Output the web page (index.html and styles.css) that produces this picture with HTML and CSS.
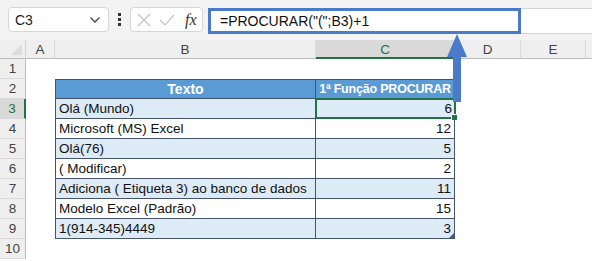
FILE: index.html
```html
<!DOCTYPE html>
<html lang="pt">
<head>
  <meta charset="UTF-8">
  <title>PROCURAR</title>
  <link rel="stylesheet" href="styles.css">
</head>
<body>
  <div class="toolbar">
    <div class="namebox">
      <span>C3</span>
      <svg class="chevron" width="12" height="8" viewBox="0 0 12 8"><path d="M1.5 1.5 L6 6 L10.5 1.5" fill="none" stroke="#444" stroke-width="1.3"/></svg>
    </div>
    <div class="dots"><i></i><i></i><i></i></div>
    <div class="fxbox">
      <svg width="14" height="14" viewBox="0 0 14 14"><path d="M1 1 L13 13 M13 1 L1 13" stroke="#c4c4c4" stroke-width="1.2"/></svg>
      <svg width="16" height="14" viewBox="0 0 16 14"><path d="M1 7 L6 12 L15 2" fill="none" stroke="#c4c4c4" stroke-width="1.2"/></svg>
      <span class="fx">fx</span>
    </div>
    <div class="formula">
      <div class="formula-text">=PROCURAR("(";B3)+1</div>
    </div>
  </div>

  <div class="sheet">
    <div class="corner"><span class="tri"></span></div>
    <div class="colhead">A</div>
    <div class="colhead">B</div>
    <div class="colhead active">C</div>
    <div class="colhead">D</div>
    <div class="colhead">E</div>
    <div class="colhead last"></div>

    <div class="rowhead">1</div><div></div><div></div><div></div><div></div><div></div><div></div>

    <div class="rowhead">2</div><div></div>
    <div class="cell th first top">Texto</div>
    <div class="cell th top narrow">1ª Função PROCURAR</div>
    <div></div><div></div><div></div>

    <div class="rowhead active">3</div><div></div>
    <div class="cell band first">Olá (Mundo)</div>
    <div class="cell band num selected">6<span class="handle"></span></div>
    <div></div><div></div><div></div>

    <div class="rowhead">4</div><div></div>
    <div class="cell first">Microsoft (MS) Excel</div>
    <div class="cell num">12</div>
    <div></div><div></div><div></div>

    <div class="rowhead">5</div><div></div>
    <div class="cell band first">Olá(76)</div>
    <div class="cell band num">5</div>
    <div></div><div></div><div></div>

    <div class="rowhead">6</div><div></div>
    <div class="cell first">( Modificar)</div>
    <div class="cell num">2</div>
    <div></div><div></div><div></div>

    <div class="rowhead">7</div><div></div>
    <div class="cell band first">Adiciona ( Etiqueta 3) ao banco de dados</div>
    <div class="cell band num">11</div>
    <div></div><div></div><div></div>

    <div class="rowhead">8</div><div></div>
    <div class="cell first">Modelo Excel (Padrão)</div>
    <div class="cell num">15</div>
    <div></div><div></div><div></div>

    <div class="rowhead">9</div><div></div>
    <div class="cell band first">1(914-345)4449</div>
    <div class="cell band num">3<span class="resize"></span></div>
    <div></div><div></div><div></div>

    <div class="rowhead">10</div><div></div><div></div><div></div><div></div><div></div><div></div>
  </div>

  <svg class="arrow" width="22" height="68" viewBox="0 0 22 68">
    <polygon points="11,0 21,23 15,23 15,68 7,68 7,23 1,23" fill="#4a7bcb"/>
  </svg>
</body>
</html>
```

FILE: styles.css
```css
body {
  margin: 0;
  width: 592px;
  height: 261px;
  overflow: hidden;
  background: #fff;
  font-family: "Liberation Sans", Arial, sans-serif;
  position: relative;
}

.toolbar {
  height: 40px;
  background: #f3f3f3;
  display: flex;
  align-items: flex-start;
  padding-top: 7px;
  box-sizing: border-box;
}

.namebox {
  margin-left: 8px;
  width: 101px;
  height: 25px;
  box-sizing: border-box;
  background: #fff;
  border: 1px solid #d6d6d6;
  border-radius: 4px;
  display: flex;
  align-items: center;
  justify-content: space-between;
  padding: 0 7px 0 6px;
  font-size: 14px;
  color: #222;
}

.dots {
  width: 21px;
  height: 25px;
  display: flex;
  flex-direction: column;
  align-items: center;
  justify-content: center;
  gap: 2px;
}

.dots i {
  width: 3px;
  height: 3px;
  background: #333;
}

.fxbox {
  width: 73px;
  height: 25px;
  box-sizing: border-box;
  background: #fff;
  border: 1px solid #d6d6d6;
  border-radius: 4px;
  display: flex;
  align-items: center;
  gap: 8px;
  padding-left: 6px;
}

.fx {
  font-family: "Liberation Serif", serif;
  font-style: italic;
  font-size: 16px;
  color: #333;
  margin-left: 2px;
}

.formula {
  margin-left: 5px;
  flex: 1;
  height: 26px;
  margin-top: 1px;
  background: #fff;
  border-top: 1px solid #d4d4d4;
  border-bottom: 1px solid #d4d4d4;
  box-sizing: border-box;
}

.formula-text {
  width: 313px;
  height: 26px;
  margin-top: -1px;
  box-sizing: border-box;
  border: 3px solid #4a7bcb;
  padding-left: 9px;
  font-size: 14px;
  line-height: 20px;
  color: #111;
}

.sheet {
  display: grid;
  grid-template-columns: 26px 29px 261px 139px 66px 65px 6px;
  grid-template-rows: 19px repeat(10, 20px);
  font-size: 13.5px;
}

.corner {
  background: #efefef;
  border-bottom: 1px solid #bcbcbc;
  border-right: 1px solid #d4d4d4;
  position: relative;
}

.tri {
  position: absolute;
  right: 3px;
  bottom: 3px;
  width: 0;
  height: 0;
  border-left: 11px solid transparent;
  border-bottom: 11px solid #dcdcdc;
}

.colhead {
  background: #efefef;
  border-bottom: 1px solid #bcbcbc;
  border-right: 1px solid #dadada;
  color: #444;
  font-size: 13.5px;
  text-align: center;
  line-height: 19px;
  box-sizing: border-box;
}

.colhead.active {
  background: #d9d9d9;
  border-bottom: 2px solid #217346;
  color: #217346;
}

.colhead.last {
  border-right: none;
}

.rowhead {
  background: #efefef;
  border-right: 1px solid #bcbcbc;
  border-bottom: 1px solid #dadada;
  color: #444;
  font-size: 13.5px;
  text-align: center;
  line-height: 20px;
  box-sizing: border-box;
}

.rowhead.active {
  background: #d9d9d9;
  border-right: 2px solid #217346;
  color: #217346;
}

.cell {
  box-sizing: border-box;
  border-right: 1px solid #44546a;
  border-bottom: 1px solid #44546a;
  padding: 0 3px;
  line-height: 19px;
  white-space: nowrap;
  color: #111;
  position: relative;
}

.cell.first {
  border-left: 1px solid #44546a;
}

.cell.top {
  border-top: 1px solid #44546a;
  line-height: 18px;
}

.cell.th {
  background: #5b9bd5;
  color: #fff;
  font-weight: bold;
  text-align: center;
  padding: 0;
  font-size: 14px;
}

.cell.th.narrow {
  font-size: 12.5px;
  letter-spacing: -0.2px;
  overflow: hidden;
}

.cell.band {
  background: #ddebf7;
}

.cell.num {
  text-align: right;
}

.cell.selected {
  border: 2px solid #217346;
  margin: -1px -1px 0 -1px;
  line-height: 17px;
  padding-right: 2px;
}

.handle {
  position: absolute;
  right: -4px;
  bottom: -4px;
  width: 5px;
  height: 5px;
  background: #217346;
  border: 1px solid #fff;
}

.resize {
  position: absolute;
  right: 0;
  bottom: 0;
  width: 0;
  height: 0;
  border-left: 5px solid transparent;
  border-bottom: 5px solid #3a58a8;
}

.arrow {
  position: absolute;
  left: 446px;
  top: 34px;
}
```
